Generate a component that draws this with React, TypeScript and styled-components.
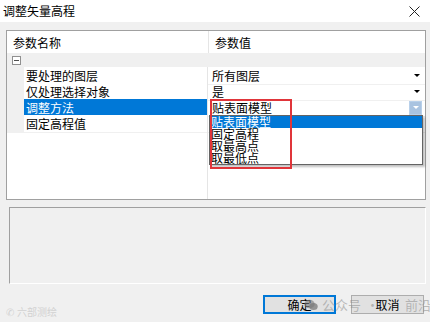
import React from 'react';
import styled, { createGlobalStyle } from 'styled-components';

const GlobalStyle = createGlobalStyle`
  html, body {
    margin: 0;
    padding: 0;
    background: #f0f0f0;
  }
  body {
    font-family: "Noto Sans CJK SC", "Noto Sans", sans-serif;
    font-size: 12px;
    color: #000;
  }
`;

const Window = styled.div`
  position: relative;
  width: 430px;
  height: 322px;
  background: #f0f0f0;
  overflow: hidden;
`;

const TitleBar = styled.div`
  height: 22px;
  background: #fff;
  display: flex;
  align-items: center;
  justify-content: space-between;
  padding: 0 10px 0 3px;
  font-size: 12px;
  line-height: 1;
`;

const Body = styled.div`
  padding: 8px 4px 0 6px;
`;

const Grid = styled.div`
  position: relative;
  height: 168px;
  border: 1px solid #a0a0a0;
  background: #fff;
  display: flex;
  flex-direction: column;
`;

const HeaderRow = styled.div`
  display: grid;
  grid-template-columns: 202px 1fr;
  height: 22px;
`;

const HeaderCell = styled.div<{ $divider?: boolean }>`
  display: flex;
  align-items: center;
  padding-left: 6px;
  border-right: ${p => (p.$divider ? '1px solid #e5e5e5' : 'none')};
`;

const GroupRow = styled.div`
  height: 14px;
  background: #f0f0f0;
  display: flex;
  align-items: center;
  padding-left: 5px;
`;

const Toggle = styled.div`
  width: 7px;
  height: 7px;
  border: 1px solid #909090;
  background: #fff;
  position: relative;
  &::after {
    content: '';
    position: absolute;
    left: 1px;
    right: 1px;
    top: 3px;
    height: 1px;
    background: #505050;
  }
`;

const PropRow = styled.div`
  display: grid;
  grid-template-columns: 17px 184px 1fr;
  height: 16px;
`;

const Margin = styled.div`
  background: #f0f0f0;
`;

const NameCell = styled.div<{ $selected?: boolean }>`
  display: flex;
  align-items: center;
  padding-left: 2px;
  background: ${p => (p.$selected ? '#0078d7' : '#fff')};
  color: ${p => (p.$selected ? '#fff' : '#000')};
  border-bottom: 1px solid ${p => (p.$selected ? '#0078d7' : '#f0f0f0')};
  border-right: 1px solid #e5e5e5;
  white-space: nowrap;
`;

const ValueCell = styled.div`
  position: relative;
  display: flex;
  align-items: center;
  justify-content: space-between;
  padding: 0 3px 0 4px;
  border-bottom: 1px solid #f0f0f0;
  white-space: nowrap;
`;

const DropButton = styled.div<{ $active?: boolean }>`
  width: 11px;
  height: 12px;
  display: flex;
  align-items: center;
  justify-content: center;
  background: ${p => (p.$active ? '#a9c3e0' : 'transparent')};
  border: ${p => (p.$active ? '1px solid #b8d0ea' : 'none')};
`;

const Arrow = styled.div<{ $light?: boolean }>`
  width: 0;
  height: 0;
  border-left: 3px solid transparent;
  border-right: 3px solid transparent;
  border-top: 3px solid ${p => (p.$light ? '#ffffff' : '#000000')};
`;

const Filler = styled.div`
  flex: 1;
  display: grid;
  grid-template-columns: 17px 184px 1fr;
`;

const FillerName = styled.div`
  border-right: 1px solid #e5e5e5;
`;

const DropList = styled.div`
  position: absolute;
  left: 202px;
  top: 84px;
  width: 212px;
  height: 48px;
  background: #fff;
  border: 1px solid #646464;
  box-shadow: 2px 2px 2px rgba(0, 0, 0, 0.25);
  display: flex;
  flex-direction: column;
  z-index: 2;
`;

const DropItem = styled.div<{ $active?: boolean }>`
  height: 12px;
  line-height: 12px;
  font-size: 12px;
  padding-left: 1px;
  background: ${p => (p.$active ? '#0078d7' : 'transparent')};
  color: ${p => (p.$active ? '#fff' : '#000')};
  white-space: nowrap;
`;

const Annotation = styled.div`
  position: absolute;
  left: 203px;
  top: 68px;
  width: 78px;
  height: 66px;
  border: 2px solid #e0353a;
  z-index: 3;
  pointer-events: none;
`;

const Description = styled.div`
  margin: 7px 0 0 3px;
  height: 75px;
  border-top: 1px solid #a0a0a0;
  border-left: 1px solid #a0a0a0;
  border-bottom: 1px solid #ffffff;
  border-right: 1px solid #ffffff;
  background: #f0f0f0;
`;

const Footer = styled.div`
  display: flex;
  justify-content: flex-end;
  gap: 15px;
  padding: 11px 2px 0 0;
`;

const Button = styled.button<{ $primary?: boolean }>`
  width: 73px;
  height: 19px;
  padding: 0;
  font-family: inherit;
  font-size: 12px;
  background: #e1e1e1;
  color: #000;
  border: ${p => (p.$primary ? '2px solid #0078d7' : '1px solid #adadad')};
  display: flex;
  align-items: center;
  justify-content: center;
`;

const Watermark = styled.div`
  position: absolute;
  left: 304px;
  top: 297px;
  display: flex;
  align-items: center;
  font-size: 13px;
  line-height: 15px;
  color: rgba(140, 140, 140, 0.55);
  pointer-events: none;
  white-space: nowrap;
`;

const MarkPart = styled.span<{ $gap: number }>`
  margin-left: ${p => p.$gap}px;
`;

const CornerMark = styled.div`
  position: absolute;
  left: 6px;
  top: 304px;
  display: flex;
  align-items: center;
  gap: 3px;
  font-size: 10px;
  color: #d2d2d2;
  pointer-events: none;
`;

const rows = [
  { name: '要处理的图层', value: '所有图层' },
  { name: '仅处理选择对象', value: '是' },
  { name: '调整方法', value: '贴表面模型', selected: true },
  { name: '固定高程值', value: '' },
];

const options = ['贴表面模型', '固定高程', '取最高点', '取最低点'];

const CloseIcon = () => (
  <svg width="11" height="11" viewBox="0 0 11 11">
    <path d="M0.5 0.5L10.5 10.5M10.5 0.5L0.5 10.5" stroke="#222" strokeWidth="1" />
  </svg>
);

const WeChatIcon = () => (
  <svg width="14" height="12" viewBox="0 0 14 12">
    <ellipse cx="5.5" cy="5" rx="5.2" ry="4.3" fill="rgba(120,120,120,0.6)" />
    <ellipse cx="9.5" cy="7.5" rx="4.2" ry="3.5" fill="rgba(120,120,120,0.75)" />
  </svg>
);

export default function App() {
  return (
    <Window>
      <GlobalStyle />
      <TitleBar>
        <span>调整矢量高程</span>
        <CloseIcon />
      </TitleBar>
      <Body>
        <Grid>
          <HeaderRow>
            <HeaderCell $divider>参数名称</HeaderCell>
            <HeaderCell>参数值</HeaderCell>
          </HeaderRow>
          <GroupRow>
            <Toggle />
          </GroupRow>
          {rows.map(r => (
            <PropRow key={r.name}>
              <Margin />
              <NameCell $selected={r.selected}>{r.name}</NameCell>
              <ValueCell>
                <span>{r.value}</span>
                {r.value && (
                  <DropButton $active={r.selected}>
                    <Arrow $light={r.selected} />
                  </DropButton>
                )}
              </ValueCell>
            </PropRow>
          ))}
          <Filler>
            <div />
            <FillerName />
            <div />
          </Filler>
          <DropList>
            {options.map((o, i) => (
              <DropItem key={o} $active={i === 0}>{o}</DropItem>
            ))}
          </DropList>
          <Annotation />
        </Grid>
        <Description />
        <Footer>
          <Button $primary>确定</Button>
          <Button>取消</Button>
        </Footer>
      </Body>
      <Watermark>
        <WeChatIcon />
        <MarkPart $gap={4}>公众号</MarkPart>
        <MarkPart $gap={5}>·</MarkPart>
        <MarkPart $gap={26}>前沿</MarkPart>
      </Watermark>
      <CornerMark>
        <span>✆</span>
        <span>六部测绘</span>
      </CornerMark>
    </Window>
  );
}
